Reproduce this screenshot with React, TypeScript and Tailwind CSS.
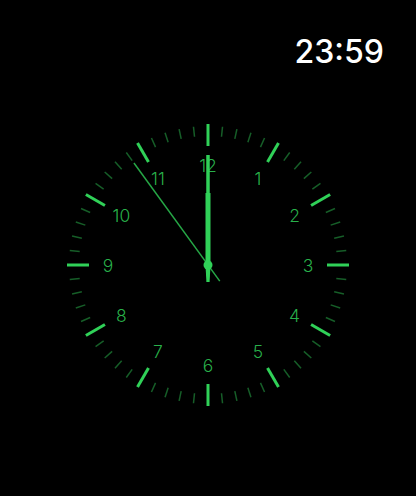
import React from "react";

const GREEN = "#30d158";
const CX = 150;
const CY = 150;

const pt = (deg: number, r: number) => {
  const a = (deg * Math.PI) / 180;
  return { x: CX + r * Math.sin(a), y: CY - r * Math.cos(a) };
};

function Dial() {
  const ticks = Array.from({ length: 60 }, (_, i) => {
    const major = i % 5 === 0;
    const a = pt(i * 6, major ? 119 : 129);
    const b = pt(i * 6, major ? 141 : 139);
    return (
      <line
        key={i}
        x1={a.x}
        y1={a.y}
        x2={b.x}
        y2={b.y}
        stroke={GREEN}
        strokeWidth={major ? 3 : 1.5}
        strokeOpacity={major ? 1 : 0.45}
      />
    );
  });

  const numbers = Array.from({ length: 12 }, (_, i) => {
    const n = i + 1;
    const p = pt(n * 30, 100);
    return (
      <text
        key={n}
        x={p.x}
        y={p.y}
        textAnchor="middle"
        dominantBaseline="central"
        fill={GREEN}
        fillOpacity={0.85}
        fontSize={17.5}
        fontWeight={300}
        fontFamily="Inter, 'Liberation Sans', sans-serif"
      >
        {n}
      </text>
    );
  });

  // 23:59:54
  const sec = pt(324, 126);
  const secTail = pt(324, -20);

  return (
    <svg width="300" height="300" viewBox="0 0 300 300">
      {ticks}
      {numbers}
      {/* minute hand */}
      <line x1={CX} y1={CY - 110} x2={CX} y2={CY} stroke={GREEN} strokeWidth={3.5} />
      {/* hour hand */}
      <line x1={CX} y1={CY - 72} x2={CX} y2={CY} stroke={GREEN} strokeWidth={5} />
      {/* tail */}
      <polygon points={`${CX - 2.5},${CY} ${CX + 2.5},${CY} ${CX + 1.6},${CY + 17} ${CX - 1.6},${CY + 17}`} fill={GREEN} />
      {/* second hand */}
      <line x1={secTail.x} y1={secTail.y} x2={sec.x} y2={sec.y} stroke={GREEN} strokeOpacity={0.8} strokeWidth={1.5} />
      <circle cx={CX} cy={CY} r={4.5} fill={GREEN} />
    </svg>
  );
}

export default function App() {
  return (
    <div className="w-[416px] h-[496px] bg-black flex flex-col overflow-hidden">
      <div className="flex justify-end pt-[36px] pr-[32px]">
        <span className="text-white text-[32px] leading-none font-medium font-['Inter','Liberation_Sans',sans-serif]">
          23:59
        </span>
      </div>
      <div className="flex justify-center mt-[47px]">
        <Dial />
      </div>
    </div>
  );
}
